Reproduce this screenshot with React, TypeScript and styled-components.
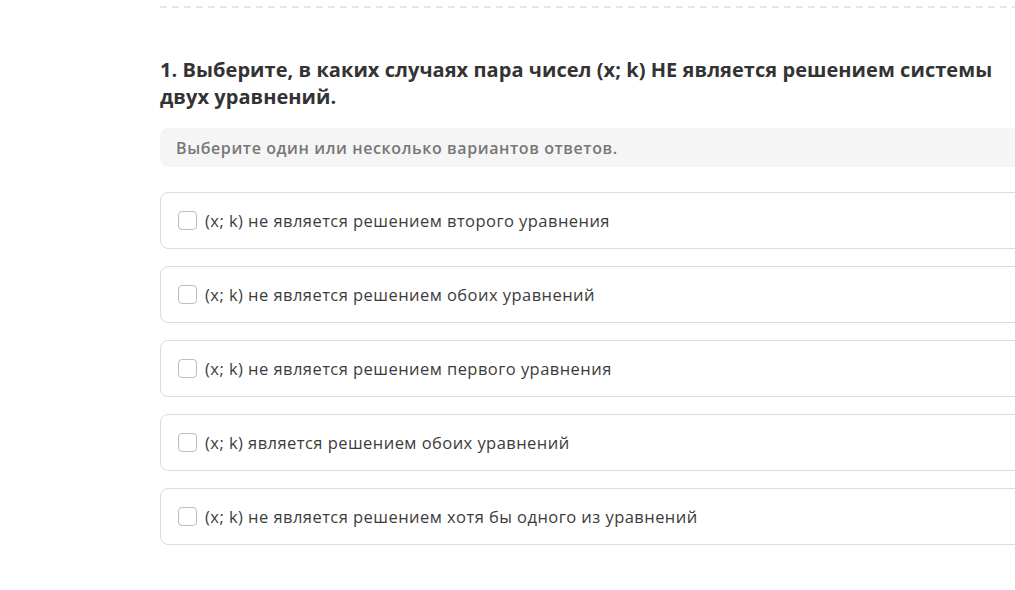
import styled, { createGlobalStyle } from 'styled-components';

const GlobalStyle = createGlobalStyle`
  html, body {
    margin: 0;
    padding: 0;
    background: #fff;
    overflow: hidden;
  }
  body {
    font-family: 'Open Sans', 'Noto Sans', sans-serif;
  }
`;

const options = [
  '(x; k) не является решением второго уравнения',
  '(x; k) не является решением обоих уравнений',
  '(x; k) не является решением первого уравнения',
  '(x; k) является решением обоих уравнений',
  '(x; k) не является решением хотя бы одного из уравнений',
];

export default function App() {
  return (
    <>
      <GlobalStyle />
      <Page>
        <Divider />
        <Question>
          <Title>
            1. Выберите, в каких случаях пара чисел (x; k) НЕ является решением системы двух
            уравнений.
          </Title>
          <Hint>Выберите один или несколько вариантов ответов.</Hint>
          <Options>
            {options.map(text => (
              <Option key={text}>
                <Box type="checkbox" />
                <OptionText>{text}</OptionText>
              </Option>
            ))}
          </Options>
        </Question>
      </Page>
    </>
  );
}

const Page = styled.div`
  width: 1015px;
  padding: 6px 0 0 160px;
  box-sizing: border-box;
  overflow: hidden;
`;

const Divider = styled.div`
  height: 2px;
  background-image: linear-gradient(to right, #e6e6e6 0 7px, transparent 7px 12px);
  background-size: 12px 2px;
  background-repeat: repeat-x;
`;

const Question = styled.div`
  padding-top: 48px;
  margin-right: -40px;
`;

const Title = styled.h2`
  margin: 0;
  width: 860px;
  font-family: 'Open Sans', sans-serif;
  font-size: 20px;
  line-height: 27px;
  font-weight: 700;
  letter-spacing: 0.05px;
  color: #333;
`;

const Hint = styled.div`
  margin-top: 18px;
  height: 39px;
  display: flex;
  align-items: center;
  padding-left: 16px;
  background: #f5f5f5;
  border-radius: 8px;
  font-size: 16px;
  font-weight: 600;
  letter-spacing: 0.6px;
  color: #777;
`;

const Options = styled.div`
  margin-top: 25px;
  display: flex;
  flex-direction: column;
  gap: 17px;
`;

const Option = styled.label`
  height: 57px;
  box-sizing: border-box;
  display: flex;
  align-items: center;
  padding-left: 17px;
  border: 1px solid #dcdcdc;
  border-radius: 8px;
  background: #fff;
`;

const Box = styled.input`
  appearance: none;
  margin: 0 8px 0 0;
  width: 19px;
  height: 19px;
  border: 1.5px solid #bdbdbd;
  border-radius: 4px;
  background: #fff;
`;

const OptionText = styled.span`
  font-size: 16.5px;
  letter-spacing: 0.45px;
  color: #3c3c3c;
`;
